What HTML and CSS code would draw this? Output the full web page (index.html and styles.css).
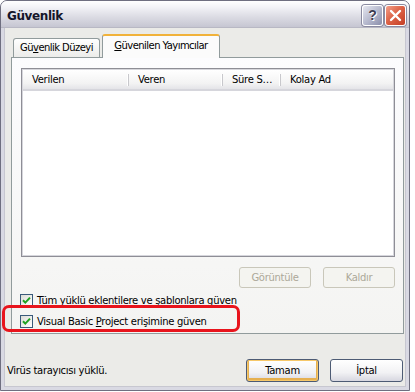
FILE: index.html
```html
<!DOCTYPE html>
<html lang="tr">
<head>
<meta charset="utf-8">
<title>Güvenlik</title>
<link rel="stylesheet" href="styles.css">
</head>
<body>
<div class="window">
  <div class="titlebar">
    <span class="title">Güvenlik</span>
    <div class="tbtns">
      <span class="tbtn help">?</span>
      <span class="tbtn close">
        <svg width="13" height="13" viewBox="0 0 13 13"><path d="M2 2 L11 11 M11 2 L2 11" stroke="#fff" stroke-width="2.4" stroke-linecap="round"/></svg>
      </span>
    </div>
  </div>
  <div class="client">
    <div class="tabs">
      <div class="tab t1">Gü<u>v</u>enlik Düzeyi</div>
      <div class="tab t2 active"><u>G</u>üvenilen Yayımcılar</div>
    </div>
    <div class="panel">
      <div class="list">
        <div class="lhead">
          <div class="col c1">Verilen</div>
          <div class="col c2">Veren</div>
          <div class="col c3">Süre S…</div>
          <div class="col c4">Kolay Ad</div>
        </div>
      </div>
      <div class="pbtns">
        <span class="btn disabled">Görüntüle</span>
        <span class="btn disabled">Kaldır</span>
      </div>
      <label class="cb">
        <span class="box"><svg width="11" height="11" viewBox="0 0 11 11"><path d="M2 5.2 L4.3 7.6 L9 2.6" fill="none" stroke="#21a121" stroke-width="2"/></svg></span>
        <span><u>T</u>üm yüklü eklentilere ve <u>ş</u>ablonlara güven</span>
      </label>
      <label class="cb">
        <span class="box"><svg width="11" height="11" viewBox="0 0 11 11"><path d="M2 5.2 L4.3 7.6 L9 2.6" fill="none" stroke="#21a121" stroke-width="2"/></svg></span>
        <span>Visual Basic <u>P</u>roject erişimine güven</span>
      </label>
    </div>
    <div class="footer">
      <span class="status">Virüs tarayıcısı yüklü.</span>
      <span class="btn default">Tamam</span>
      <span class="btn">İptal</span>
    </div>
    <div class="highlight"></div>
  </div>
</div>
</body>
</html>
```
FILE: styles.css
```css
html, body {
  margin: 0;
  padding: 0;
  background: #ffffff;
}
body {
  font-family: "DejaVu Sans", sans-serif;
  font-size: 10px;
  letter-spacing: -0.3px;
  color: #000;
  width: 415px;
  height: 392px;
  overflow: hidden;
}
.window {
  width: 408px;
  height: 389px;
  border: 1px solid #6f6f80;
  border-radius: 7px 7px 0 0;
  background: #d9d9e3;
  display: flex;
  flex-direction: column;
  overflow: hidden;
}
.titlebar {
  height: 26px;
  flex: none;
  display: flex;
  align-items: center;
  justify-content: space-between;
  padding: 0 3px 0 6px;
  background: linear-gradient(#ffffff 0%, #f2f2f6 25%, #dcdce4 60%, #c6c6d2 100%);
  border-bottom: 1px solid #b8b8c4;
}
.title {
  font-weight: bold;
  font-size: 12px;
  letter-spacing: -0.4px;
  color: #15152a;
  padding-top: 3px;
}
.tbtns {
  display: flex;
  gap: 2px;
  padding-top: 2px;
}
.tbtn {
  width: 21px;
  height: 21px;
  box-sizing: border-box;
  border: 1px solid #ffffff;
  border-radius: 3px;
  display: flex;
  align-items: center;
  justify-content: center;
  box-shadow: 0 0 0 1px #8a8aa0;
  letter-spacing: 0;
}
.help {
  background: linear-gradient(135deg, #e6e7f0 0%, #b8bbcf 50%, #8b8fab 100%);
  color: #3c3c50;
  font-weight: bold;
  font-size: 14px;
  font-family: "Liberation Sans", sans-serif;
  text-shadow: 0 0 1px #fff, 1px 1px 0 #fff;
}
.close {
  background: linear-gradient(135deg, #f3a08a 0%, #dd6448 45%, #c43e25 100%);
}
.client {
  position: relative;
  flex: 1;
  margin: 0 3px 3px 3px;
  background: #ebebe8;
  border: 1px solid #c7c7d0;
  border-top: none;
  padding: 6px 2px 0 6px;
}
.tabs {
  display: flex;
  align-items: flex-end;
  height: 23px;
  padding-left: 2px;
}
.tab {
  height: 19px;
  box-sizing: border-box;
  padding-top: 3px;
  border: 1px solid #919b9c;
  border-bottom: none;
  border-radius: 3px 3px 0 0;
  background: linear-gradient(#ffffff, #ececea);
  white-space: nowrap;
  text-align: center;
  letter-spacing: -0.55px;
}
.t1 { width: 87px; }
.t2 { width: 118px; }
.tab + .tab {
  margin-left: 2px;
}
.tab.active {
  height: 24px;
  padding-top: 4px;
  background: #fbfbfb;
  border-top: 2px solid #f1b23a;
  margin-bottom: -1px;
  position: relative;
  z-index: 1;
}
u {
  text-decoration: underline;
  text-underline-offset: 1px;
}
.panel {
  width: 393px;
  height: 277px;
  box-sizing: border-box;
  border: 1px solid #919b9c;
  background: linear-gradient(#fcfcfe, #f4f4f2);
  padding: 10px 8px 0 9px;
}
.list {
  height: 189px;
  box-sizing: border-box;
  border: 1px solid #8e8e96;
  box-shadow: inset 0 0 0 1px #d6d6dc;
  background: #ffffff;
  padding: 1px;
}
.lhead {
  display: flex;
  height: 19px;
  background: linear-gradient(#ffffff, #f3f3f3 70%, #e4e4e8);
  border-bottom: 2px solid #d6d6dc;
}
.col {
  position: relative;
  box-sizing: border-box;
  padding: 4px 0 0 9px;
  white-space: nowrap;
}
.col::after {
  content: "";
  position: absolute;
  right: 0;
  top: 4px;
  height: 12px;
  border-right: 1px solid #c8c8cc;
  border-left: 1px solid #ffffff;
}
.col.c4::after { display: none; }
.c1 { width: 106px; }
.c2 { width: 94px; }
.c3 { width: 58px; }
.c4 { flex: 1; }
.pbtns {
  display: flex;
  justify-content: flex-end;
  gap: 12px;
  margin-top: 10px;
}
.btn {
  width: 72px;
  height: 21px;
  box-sizing: border-box;
  display: flex;
  align-items: center;
  justify-content: center;
  border: 1px solid #4d5b74;
  border-radius: 3px;
  background: linear-gradient(#ffffff, #f2f2f4 60%, #d7d7e0);
}
.btn.disabled {
  border-color: #c9c7ba;
  color: #aca899;
  background: #f4f4f0;
}
.cb {
  display: flex;
  align-items: center;
  gap: 4px;
  height: 21px;
  margin-left: -1px;
}
.pbtns + .cb {
  margin-top: 2px;
}
.box {
  width: 13px;
  height: 13px;
  box-sizing: border-box;
  border: 1px solid #3a5a7a;
  background: linear-gradient(135deg, #dcdcd6, #ffffff);
  display: flex;
  align-items: center;
  justify-content: center;
}
.footer {
  display: flex;
  align-items: center;
  margin-left: -4px;
  padding-top: 25px;
}
.status {
  flex: 1;
}
.footer .btn {
  width: 73px;
  height: 23px;
}
.footer .btn + .btn {
  margin-left: 11px;
}
.btn.default {
  box-shadow: inset 0 0 0 1px #f6c86a, inset 0 -1px 0 2px #e6b050;
}
.highlight {
  position: absolute;
  left: -3px;
  top: 277px;
  width: 232px;
  height: 21px;
  border: 3px solid #e8141c;
  border-radius: 7px;
}
```
